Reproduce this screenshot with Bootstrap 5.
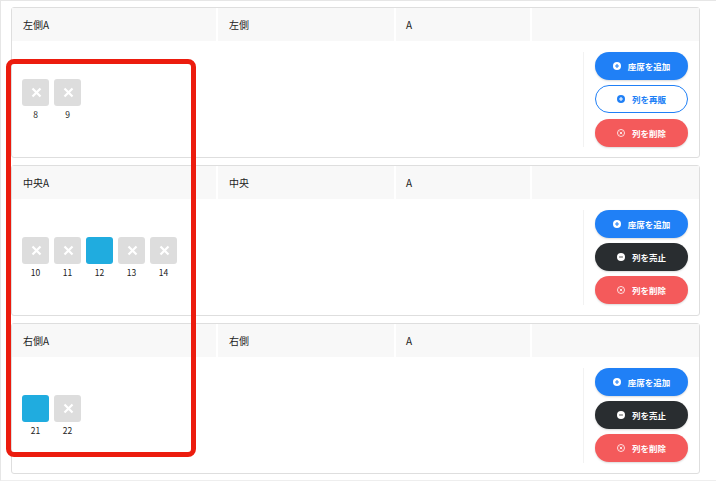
<!DOCTYPE html>
<html lang="ja">
<head>
  <meta charset="UTF-8">
  <title>座席管理</title>
  <link href="https://cdn.jsdelivr.net/npm/bootstrap@5.3.0/dist/css/bootstrap.min.css" rel="stylesheet">
  <style>
    html, body { height: 481px; overflow: hidden; }
    body {
      background: #fff;
      color: #222;
      font-family: "Noto Sans CJK JP", "Noto Sans", sans-serif;
      font-size: 10px;
    }
    .page-frame {
      position: relative;
      height: 481px;
      border-top: 1px solid #e6e6e6;
      border-left: 1px solid #e6e6e6;
      border-bottom: 1px solid #eeeeee;
      padding: 6px 16px 0 10px;
    }
    .row-box {
      height: 151px;
      margin-bottom: 7px;
      border: 1px solid #dedede;
      border-radius: 3px;
      box-sizing: border-box;
    }
    .row-head { height: 33px; background: #f8f8f8; }
    .head-cell {
      border-right: 2px solid #fff;
      padding-left: 11px;
      line-height: 34px;
      font-size: 10px;
      color: #222;
    }
    .hc-1 { width: 206px; }
    .hc-2 { width: 178px; }
    .hc-3 { width: 136px; padding-left: 10px; }
    .row-main { height: 116px; }
    .seat-area { padding: 1px 0 0 10px; }
    .seat-list { gap: 5px; }
    .seat-item { width: 27px; text-align: center; }
    .seat-box {
      width: 27px;
      height: 27px;
      border-radius: 3px;
      background: #dddddd;
    }
    .seat-on { background: #20acdf; }
    .seat-no { margin-top: 3px; font-size: 8.5px; line-height: 11px; color: #222; }
    .btn-area {
      width: 105px;
      height: 95px;
      margin: 11px 11px 0 0;
      padding-left: 11px;
      border-left: 1px solid #f2f2f2;
      gap: 5px;
    }
    .pill {
      width: 93px;
      height: 28px;
      padding: 0;
      border-radius: 14px;
      font-size: 8.5px;
      font-weight: 700;
      line-height: 1;
      color: #fff;
      box-shadow: 0 1px 2px rgba(0, 0, 0, .15);
    }
    .pill svg { width: 8px; height: 8px; margin-right: 7px; vertical-align: -0.5px; }
    .pill-blue, .pill-blue:hover { background: #2080f6; border: 0; color: #fff; }
    .pill-line, .pill-line:hover { background: #fff; border: 1px solid #2080f6; color: #2080f6; box-shadow: none; margin-bottom: 1px; }
    .pill-dark, .pill-dark:hover { background: #292d30; border: 0; color: #fff; }
    .pill-red, .pill-red:hover { background: #f45a5b; border: 0; color: #fff; }
    .mark-frame {
      position: absolute;
      left: 5px;
      top: 58px;
      width: 190px;
      height: 398px;
      border: 5px solid #ec1c0e;
      border-radius: 8px;
      pointer-events: none;
    }
  </style>
</head>
<body>
  <div class="page-frame">
    <div id="rows"></div>
    <div class="mark-frame"></div>
  </div>

  <script src="https://cdn.jsdelivr.net/npm/bootstrap@5.3.0/dist/js/bootstrap.bundle.min.js"></script>
  <script>
    const rows = [
      { name: '左側A', side: '左側', seats: [[8, 0], [9, 0]], second: 'resale' },
      { name: '中央A', side: '中央', seats: [[10, 0], [11, 0], [12, 1], [13, 0], [14, 0]], second: 'stop' },
      { name: '右側A', side: '右側', seats: [[21, 1], [22, 0]], second: 'stop' }
    ];

    const cross = `<svg viewBox="0 0 27 27" width="27" height="27"><path d="M10.5 9.5l8 8M18.5 9.5l-8 8" stroke="#fff" stroke-width="2.2" fill="none"/></svg>`;
    const plus = (bg, fg) => `<svg viewBox="0 0 10 10"><circle cx="5" cy="5" r="5" fill="${bg}"/><path d="M2.6 5h4.8M5 2.6v4.8" stroke="${fg}" stroke-width="1.3"/></svg>`;
    const minus = `<svg viewBox="0 0 10 10"><circle cx="5" cy="5" r="5" fill="#fff"/><path d="M2.6 5h4.8" stroke="#777" stroke-width="1.6"/></svg>`;
    const times = `<svg viewBox="0 0 10 10"><circle cx="5" cy="5" r="4.4" fill="none" stroke="#fff" stroke-width="1"/><path d="M3.4 3.4l3.2 3.2M6.6 3.4L3.4 6.6" stroke="#fff" stroke-width="1"/></svg>`;

    const secondBtn = {
      resale: `<button class="btn pill pill-line">${plus('#2080f6', '#fff')}列を再販</button>`,
      stop: `<button class="btn pill pill-dark">${minus}列を売止</button>`
    };

    document.getElementById('rows').innerHTML = rows.map(r => `
      <div class="row-box">
        <div class="row-head d-flex">
          <div class="head-cell hc-1">${r.name}</div>
          <div class="head-cell hc-2">${r.side}</div>
          <div class="head-cell hc-3">A</div>
        </div>
        <div class="row-main d-flex justify-content-between">
          <div class="seat-area d-flex align-items-center">
            <div class="d-flex seat-list">
              ${r.seats.map(s => `
                <div class="seat-item">
                  <div class="seat-box ${s[1] ? 'seat-on' : ''}">${s[1] ? '' : cross}</div>
                  <div class="seat-no">${s[0]}</div>
                </div>`).join('')}
            </div>
          </div>
          <div class="btn-area d-flex flex-column">
            <button class="btn pill pill-blue">${plus('#fff', '#2080f6')}座席を追加</button>
            ${secondBtn[r.second]}
            <button class="btn pill pill-red">${times}列を削除</button>
          </div>
        </div>
      </div>`).join('');
  </script>
</body>
</html>
